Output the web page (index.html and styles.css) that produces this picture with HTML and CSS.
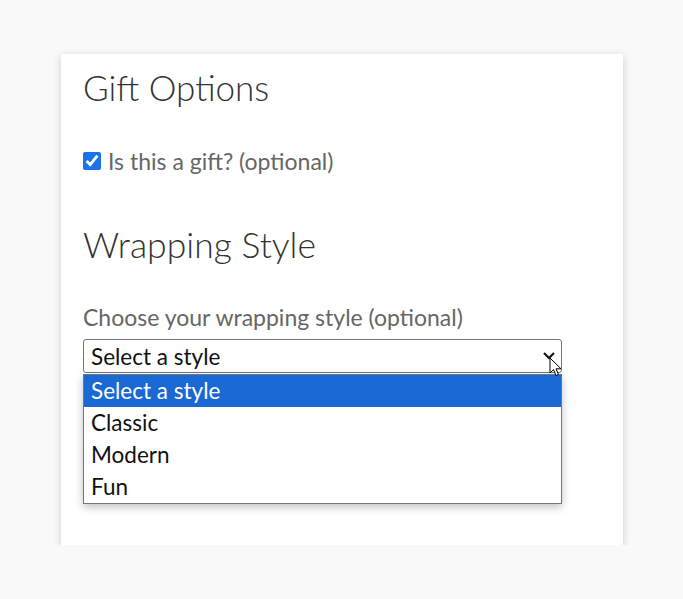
FILE: index.html
```html
<!DOCTYPE html>
<html>
    <head>
        <title>Gift Options</title>
        <meta charset="UTF-8" />
        <meta name="viewport" content="width=device-width, initial-scale=1.0" />
        <link rel="stylesheet" href="styles.css">
    </head>
    <body>
        <div class="card">
            <h2 class="heading">Gift Options</h2>
            <label class="check-row">
                <input type="checkbox" class="check" checked>
                <span>Is this a gift? (optional)</span>
            </label>

            <h2 class="heading heading-wrap">Wrapping Style</h2>
            <div class="field-label">Choose your wrapping style (optional)</div>
            <div class="select-wrap">
                <div class="select">
                    <span>Select a style</span>
                    <svg class="chevron" width="14" height="10" viewBox="0 0 14 10">
                        <path d="M2 2 L7 7 L12 2" fill="none" stroke="#111" stroke-width="2.2"/>
                    </svg>
                </div>
                <!-- open dropdown list -->
                <ul class="options">
                    <li class="option selected">Select a style</li>
                    <li class="option">Classic</li>
                    <li class="option">Modern</li>
                    <li class="option">Fun</li>
                </ul>
                <svg class="cursor" width="14" height="20" viewBox="0 0 14 20">
                    <path d="M1 1 L1 16 L4.5 12.5 L7 18.5 L9.5 17.5 L7 11.8 L12 11.8 Z" fill="#fff" stroke="#000" stroke-width="1"/>
                </svg>
            </div>
        </div>
    </body>
</html>
```

FILE: styles.css
```css
body {
    margin: 0;
    background-color: #f9f9f9;
    font-family: Lato, "Liberation Sans", sans-serif;
}

.card {
    width: 562px;
    box-sizing: border-box;
    margin: 54px 0 0 61px;
    padding: 10px 22px 172px 22px;
    background-color: #fff;
    box-shadow: 0 2px 8px rgba(0, 0, 0, 0.18);
}

.heading {
    margin: 0;
    font-size: 35px;
    font-weight: 300;
    color: #333;
    line-height: 46px;
}

.heading-wrap {
    margin-top: 47px;
    font-size: 35.5px;
}

.check-row {
    display: flex;
    align-items: center;
    gap: 7px;
    margin-top: 37px;
    font-size: 23px;
    line-height: 28px;
    color: #666;
}

.check {
    width: 18px;
    height: 18px;
    margin: 0;
    accent-color: #1a73e8;
}

.field-label {
    margin-top: 35px;
    font-size: 23px;
    color: #666;
    line-height: 28px;
}

.select-wrap {
    position: relative;
    width: 479px;
    margin-top: 8px;
}

.select {
    display: flex;
    align-items: center;
    justify-content: space-between;
    height: 34px;
    box-sizing: border-box;
    padding: 0 5px 0 7px;
    border: 1px solid #767676;
    border-radius: 3px;
    font-size: 22.5px;
    color: #111;
}

.options {
    position: absolute;
    top: 35px;
    left: 0;
    right: 0;
    margin: 0;
    padding: 0;
    list-style: none;
    background-color: #fff;
    border: 1px solid #767676;
    box-shadow: 0 3px 8px rgba(0, 0, 0, 0.25);
}

.option {
    height: 32px;
    line-height: 32px;
    padding-left: 7px;
    font-size: 22.5px;
    color: #111;
}

.option.selected {
    background-color: #1a68d3;
    color: #fff;
}

.cursor {
    position: absolute;
    top: 18px;
    left: 466px;
}
```
